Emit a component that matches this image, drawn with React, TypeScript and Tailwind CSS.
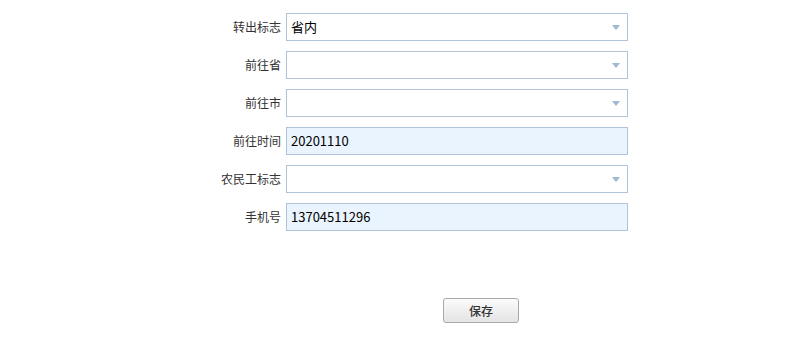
import { useState } from 'react';

type Field = {
  label: string;
  value: string;
  select?: boolean;
};

const fields: Field[] = [
  { label: '转出标志', value: '省内', select: true },
  { label: '前往省', value: '', select: true },
  { label: '前往市', value: '', select: true },
  { label: '前往时间', value: '20201110' },
  { label: '农民工标志', value: '', select: true },
  { label: '手机号', value: '13704511296' },
];

const font = { fontFamily: '"Noto Sans CJK SC", "Liberation Sans", sans-serif' };

function Row({ field }: { field: Field }) {
  return (
    <div className="flex items-center">
      <span className="w-[281px] text-right text-[12px] text-[#333]">{field.label}</span>
      <div
        className={`ml-[5px] flex h-[28px] w-[342px] items-center justify-between border border-[#b0c4d9] pl-[4px] pr-[7px] text-[13px] text-black ${
          field.select ? 'bg-white' : 'bg-[#eaf4fe]'
        }`}
      >
        <span>{field.value}</span>
        {field.select ? (
          <svg width="8" height="5" viewBox="0 0 8 5">
            <path d="M0 0 H8 L4 5 Z" fill="#9fb8d3" />
          </svg>
        ) : null}
      </div>
    </div>
  );
}

export default function App() {
  const [saved, setSaved] = useState(false);

  return (
    <div className="h-[343px] w-[800px] bg-white pt-[13px]" style={font}>
      <div className="flex flex-col gap-[10px]">
        {fields.map((f) => (
          <Row key={f.label} field={f} />
        ))}
      </div>
      <button
        onClick={() => setSaved(true)}
        className="ml-[443px] mt-[67px] flex h-[25px] w-[76px] items-center justify-center rounded-[3px] border border-[#a9a9a9] bg-gradient-to-b from-[#fbfbfb] to-[#e4e4e4] text-[12px] font-medium text-[#333]"
      >
        {saved ? '保存' : '保存'}
      </button>
    </div>
  );
}
